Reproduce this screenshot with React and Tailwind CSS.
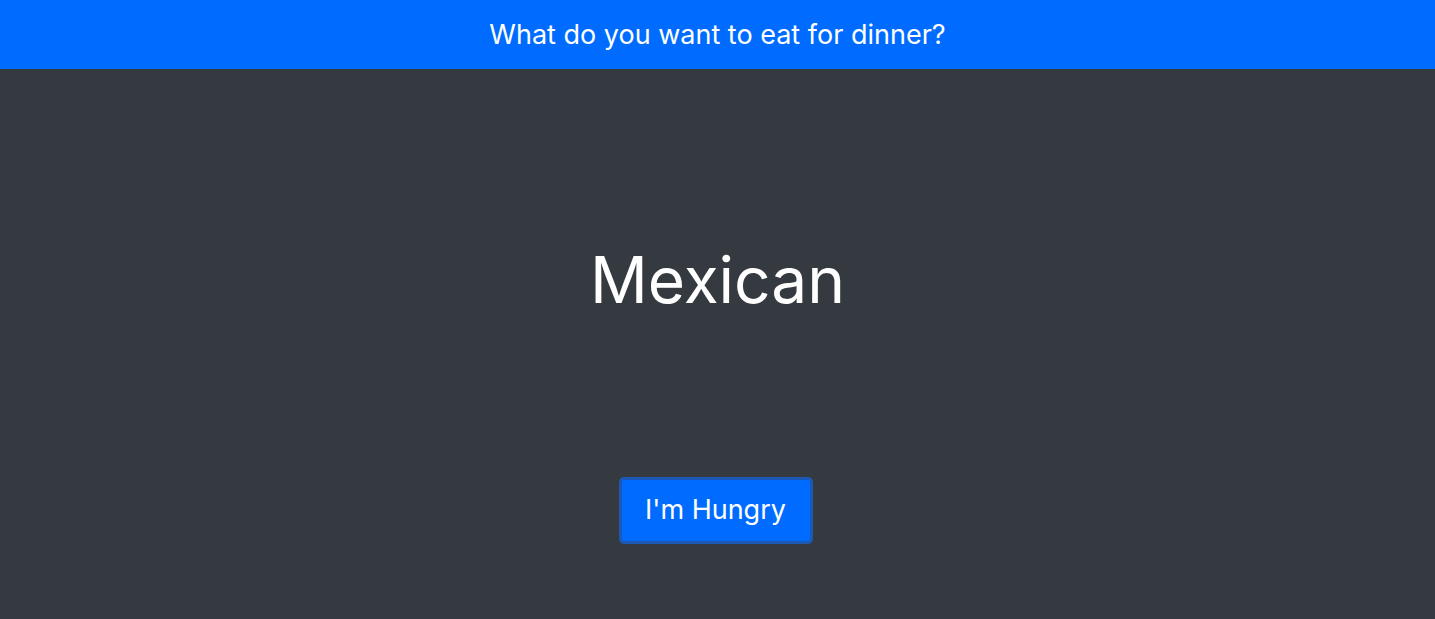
export default function App() {
  return (
    <div className="min-h-screen bg-[#343a40] flex flex-col font-['Inter',Arial,sans-serif] text-white">
      <header className="h-[69px] bg-[#006cff] flex items-center justify-center">
        <h1 className="text-[27px] leading-none">What do you want to eat for dinner?</h1>
      </header>
      <main className="flex flex-col items-center">
        <div className="mt-[179px] text-[64px] leading-none">Mexican</div>
        <button className="mt-[165px] mr-1 w-[194px] h-[67px] bg-[#006cff] border-[3px] border-[#1c58b5] rounded-[5px] text-[27px]">
          I'm Hungry
        </button>
      </main>
    </div>
  );
}
